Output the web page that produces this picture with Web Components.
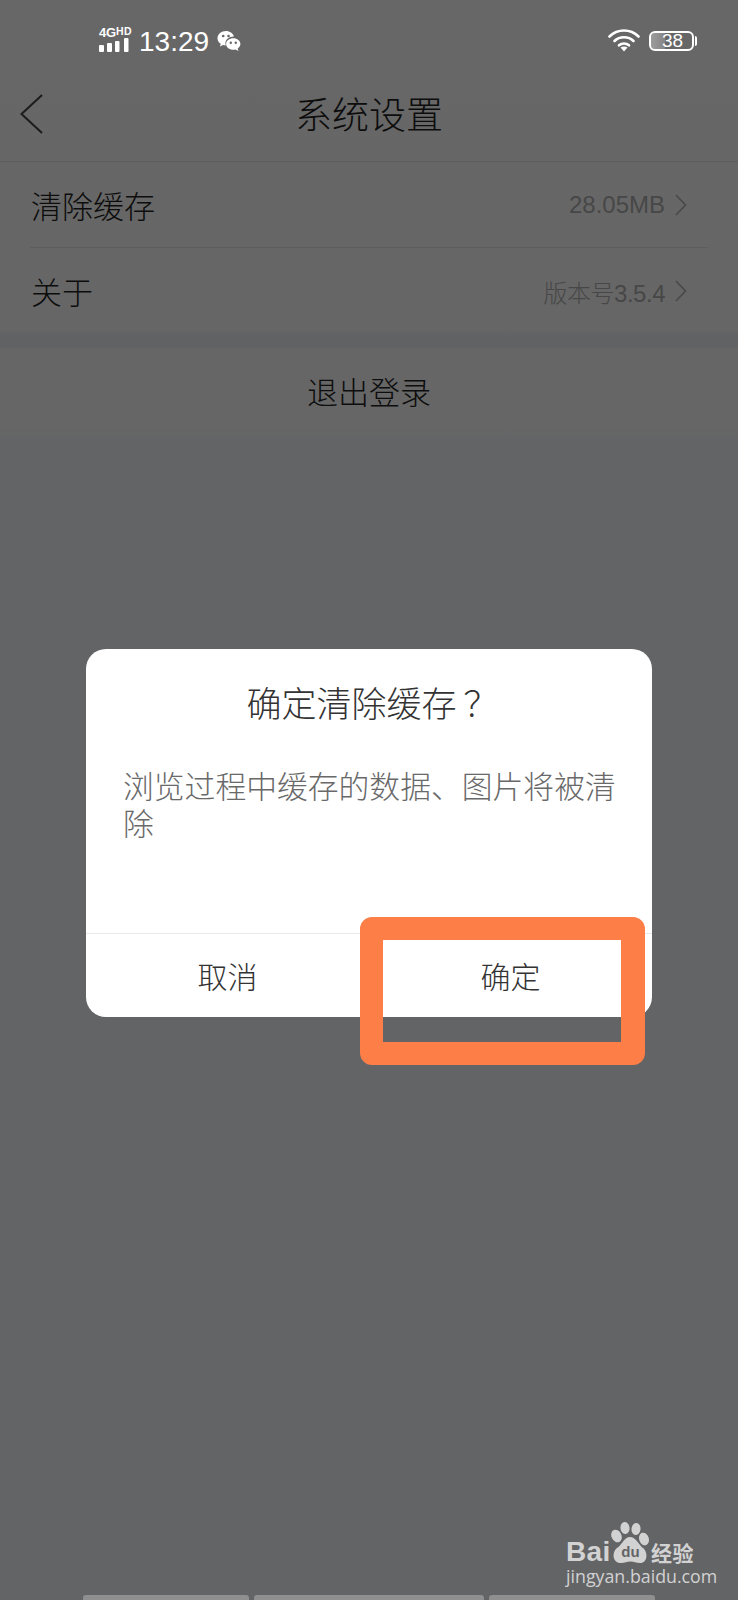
<!DOCTYPE html>
<html lang="zh">
<head>
<meta charset="utf-8">
<title>系统设置</title>
<style>
  html, body { margin: 0; padding: 0; background: #636466; }
  body { font-family: "Noto Sans CJK SC", "Liberation Sans", sans-serif; font-weight: 300; }
</style>
</head>
<body>
<settings-page>
  <status-bar slot="status"></status-bar>
  <nav-bar slot="nav">系统设置</nav-bar>
  <setting-row slot="rows" label="清除缓存" value="28.05MB" divider></setting-row>
  <setting-row slot="rows" label="关于" value="版本号3.5.4" narrow></setting-row>
  <logout-row slot="logout">退出登录</logout-row>
  <confirm-dialog slot="overlay" heading="确定清除缓存" cancel="取消" ok="确定">浏览过程中缓存的数据、图片将被清除</confirm-dialog>
  <baidu-mark slot="overlay"></baidu-mark>
  <bottom-tabs slot="bottom"></bottom-tabs>
</settings-page>

<script>
class SettingsPage extends HTMLElement {
  constructor() {
    super();
    this.attachShadow({ mode: "open" });
    this.shadowRoot.innerHTML = `
      <style>
        :host {
          display: flex;
          flex-direction: column;
          position: relative;
          width: 738px;
          height: 1600px;
          overflow: hidden;
          background: linear-gradient(#676767 0, #666666 330px, #616264 336px, #616264 347px, #666666 349px, #666666 425px, #636466 445px);
        }
        .spacer { flex: 1; }
      </style>
      <slot name="status"></slot>
      <slot name="nav"></slot>
      <slot name="rows"></slot>
      <slot name="logout"></slot>
      <div class="spacer"></div>
      <slot name="bottom"></slot>
      <slot name="overlay"></slot>
    `;
  }
}

class StatusBar extends HTMLElement {
  constructor() {
    super();
    this.attachShadow({ mode: "open" });
    this.shadowRoot.innerHTML = `
      <style>
        :host {
          display: flex;
          align-items: center;
          box-sizing: border-box;
          height: 84px;
          padding: 0 42px 0 99px;
          color: #fff;
          font-family: "Liberation Sans", sans-serif;
          font-weight: 400;
        }
        .net { display: flex; flex-direction: column; width: 32px; margin-top: -6px; }
        .net-text { font-size: 13px; font-weight: 700; line-height: 11px; height: 11px; white-space: nowrap; letter-spacing: -.2px; }
        .net-text small { font-size: 10.500px; vertical-align: 2px; letter-spacing: .4px; }
        .time { font-size: 28px; line-height: 34px; margin-left: 8px; }
        .wechat { margin-left: 8px; margin-top: -1px; }
        .spacer { flex: 1; }
        .wifi { margin-top: -4px; }
        .battery {
          position: relative;
          display: flex;
          align-items: center;
          justify-content: center;
          box-sizing: border-box;
          width: 45px;
          height: 20px;
          margin: -3px 2px 0 9px;
          padding-left: 2px;
          border: 2px solid #fff;
          border-radius: 6px;
          background: linear-gradient(90deg, #9c9c9c 0, #858585 35%, transparent 35%);
          background-clip: padding-box;
          font-size: 19px;
          line-height: 16px;
        }
        .battery::after {
          content: "";
          position: absolute;
          right: -5px;
          top: 3px;
          width: 2px;
          height: 10px;
          background: #fff;
          border-radius: 0 2px 2px 0;
        }
      </style>
      <div class="net">
        <div class="net-text">4G<small>HD</small></div>
        <svg width="30" height="14" viewBox="0 0 30 14" style="margin-top:1px">
          <rect x="0" y="7" width="5" height="7" rx="1" fill="#fff"/>
          <rect x="8" y="5" width="5" height="9" rx="1" fill="#fff"/>
          <rect x="16" y="3" width="4.500" height="11" rx="1" fill="#fff"/>
          <rect x="25" y="0" width="4.500" height="14" rx="1" fill="#fff"/>
        </svg>
      </div>
      <span class="time">13:29</span>
      <svg class="wechat" width="24" height="24" viewBox="0 0 24 24">
        <path d="M9 1C4.300 1 .5 4.200 .5 8.200c0 2.300 1.300 4.300 3.200 5.600L3 16.500l3-1.500c.9.300 1.800.4 2.800.4-.3-.8-.4-1.500-.4-2.200 0-3.800 3.600-6.800 8-6.800h.6C15.900 3.400 12.700 1 9 1z" fill="#fff"/>
        <path d="M16.300 8.200c-4 0-7.200 2.500-7.200 5.800s3.200 5.800 7.200 5.800c.9 0 1.700-.1 2.400-.4l2.700 1.500-.7-2.400c1.600-1.100 2.700-2.700 2.700-4.500 0-3.300-3.200-5.800-7.100-5.800z" fill="#fff"/>
        <circle cx="6.200" cy="6" r="1.300" fill="#666"/>
        <circle cx="11.500" cy="6" r="1.300" fill="#666"/>
        <circle cx="13.800" cy="12.800" r="1.200" fill="#666"/>
        <circle cx="18.800" cy="12.800" r="1.200" fill="#666"/>
      </svg>
      <div class="spacer"></div>
      <svg class="wifi" width="32" height="24" viewBox="0 0 32 24" fill="none" stroke="#fff" stroke-width="2.600" stroke-linecap="round">
        <path d="M1.500 8.500C9.500 .5 22.500 .5 30.500 8.500"/>
        <path d="M6.500 13C11.500 8 20.500 8 25.500 13"/>
        <path d="M11 17.300C13.800 14.800 18.200 14.800 21 17.300"/>
        <path d="M12.500 19.500L16 23.500L19.500 19.500C17.500 18 14.500 18 12.500 19.500Z" fill="#fff" stroke="none"/>
      </svg>
      <div class="battery">38</div>
    `;
  }
}

class NavBar extends HTMLElement {
  constructor() {
    super();
    this.attachShadow({ mode: "open" });
    this.shadowRoot.innerHTML = `
      <style>
        :host {
          display: flex;
          align-items: center;
          justify-content: center;
          position: relative;
          box-sizing: border-box;
          height: 78px;
          padding-bottom: 20px;
          border-bottom: 1px solid #5d5d5d;
          color: #0d0d0d;
          font-size: 37px;
          line-height: 50px;
        }
        svg { position: absolute; left: 19px; top: 9px; }
      </style>
      <svg width="26" height="42" viewBox="0 0 26 42" fill="none" stroke="#1c1c1c" stroke-width="2">
        <path d="M23 2L2.500 21L23 40"/>
      </svg>
      <slot></slot>
    `;
  }
}

class SettingRow extends HTMLElement {
  constructor() {
    super();
    this.attachShadow({ mode: "open" });
    this.shadowRoot.innerHTML = `
      <style>
        :host { display: block; }
        .row {
          display: flex;
          align-items: center;
          justify-content: space-between;
          box-sizing: border-box;
          height: 86px;
          margin: 0 30px;
          padding-right: 21px;
          color: #0d0d0d;
          font-size: 31px;
        }
        :host([divider]) .row { border-bottom: 1px solid #5d5d5d; }
        .label { margin: -1px 0 0 1px; }
        .value {
          display: flex;
          align-items: center;
          gap: 10px;
          color: #474747;
          font-family: "Liberation Sans", "Noto Sans CJK SC", sans-serif;
          font-size: 24px;
        }
        :host([narrow]) .val { letter-spacing: -.5px; }
      </style>
      <div class="row">
        <span class="label"></span>
        <div class="value">
          <span class="val"></span>
          <svg width="12" height="22" viewBox="0 0 12 22" fill="none" stroke="#4a4a4a" stroke-width="1.800"><path d="M1 1L10.500 11L1 21"/></svg>
        </div>
      </div>
    `;
  }

  connectedCallback() {
    this.shadowRoot.querySelector(".label").textContent = this.getAttribute("label");
    this.shadowRoot.querySelector(".val").textContent = this.getAttribute("value");
  }
}

class LogoutRow extends HTMLElement {
  constructor() {
    super();
    this.attachShadow({ mode: "open" });
    this.shadowRoot.innerHTML = `
      <style>
        :host {
          display: flex;
          align-items: center;
          justify-content: center;
          height: 86px;
          margin-top: 13px;
          color: #0d0d0d;
          font-size: 31px;
        }
      </style>
      <slot></slot>
    `;
  }
}

class ConfirmDialog extends HTMLElement {
  constructor() {
    super();
    this.attachShadow({ mode: "open" });
    this.shadowRoot.innerHTML = `
      <style>
        :host {
          display: flex;
          flex-direction: column;
          position: absolute;
          left: 86px;
          top: 649px;
          width: 566px;
          height: 368px;
          box-sizing: border-box;
          background: #fff;
          border-radius: 20px;
        }
        h2 {
          margin: 0;
          padding-top: 28px;
          text-align: center;
          color: #333;
          font-size: 35px;
          font-weight: 300;
          line-height: 50px;
        }
        /* the full-width mark sits left in its cell in this font, nudge it over */
        h2 span { margin: 0 -7px 0 7px; }
        .body {
          flex: 1;
          padding: 40px 32px 0 37px;
          color: #696969;
          font-size: 30.800px;
          line-height: 36.500px;
          word-break: break-all;
        }
        .buttons {
          display: flex;
          height: 83px;
          border-top: 1px solid #e9e9e9;
          color: #333;
          font-size: 30px;
        }
        .buttons div { flex: 1; display: flex; align-items: center; justify-content: center; padding-bottom: 2px; }
      </style>
      <h2><slot-text></slot-text><span>？</span></h2>
      <div class="body"><slot></slot></div>
      <div class="buttons">
        <div class="cancel"></div>
        <div class="ok"></div>
      </div>
      <annotation-box></annotation-box>
    `;
  }

  connectedCallback() {
    this.shadowRoot.querySelector("slot-text").textContent = this.getAttribute("heading");
    this.shadowRoot.querySelector(".cancel").textContent = this.getAttribute("cancel");
    this.shadowRoot.querySelector(".ok").textContent = this.getAttribute("ok");
  }
}

class AnnotationBox extends HTMLElement {
  constructor() {
    super();
    this.attachShadow({ mode: "open" });
    this.shadowRoot.innerHTML = `
      <style>
        :host {
          position: absolute;
          left: 274px;
          top: 268px;
          width: 285px;
          height: 148px;
          box-sizing: border-box;
          border-style: solid;
          border-color: #fd7e47;
          border-width: 23px 24px 23px 23px;
          border-radius: 12px;
        }
      </style>
    `;
  }
}

class BaiduMark extends HTMLElement {
  constructor() {
    super();
    this.attachShadow({ mode: "open" });
    this.shadowRoot.innerHTML = `
      <style>
        :host {
          position: absolute;
          left: 566px;
          top: 1522px;
          width: 134px;
          height: 62px;
          display: flex;
          flex-direction: column;
          color: #d2d2d2;
        }
        .top { display: flex; align-items: flex-end; height: 41px; }
        .bai { font: 700 28px/26px "Liberation Sans", sans-serif; letter-spacing: .3px; width: 44px; margin-bottom: -2px; }
        .jy { font-size: 21px; line-height: 24px; font-weight: 700; white-space: nowrap; margin-left: 1px; letter-spacing: .5px; margin-bottom: -1px; }
        .url { font: 17.800px/20px "Open Sans", sans-serif; white-space: nowrap; margin-top: 3px; }
        svg text { font: 700 15px "Liberation Sans", sans-serif; fill: #636466; }
      </style>
      <div class="top">
        <span class="bai">Bai</span>
        <svg width="40" height="41" viewBox="0 0 40 41" style="flex:none">
          <ellipse cx="6.500" cy="14" rx="5" ry="6.500" transform="rotate(-25 6.500 14)" fill="#d2d2d2"/>
          <ellipse cx="15" cy="6" rx="4.500" ry="6" transform="rotate(-8 15 6)" fill="#d2d2d2"/>
          <ellipse cx="26" cy="7" rx="4.500" ry="6" transform="rotate(8 26 7)" fill="#d2d2d2"/>
          <ellipse cx="34" cy="17" rx="4.800" ry="6.500" transform="rotate(-18 34 17)" fill="#d2d2d2"/>
          <path d="M20 15C14 15 13 22 7 26C2 30 2 41 11 41C15 41 17 39.500 20.500 39.500C24 39.500 26 41 30 41C38 41 38 30 33 26C28 22 26 15 20 15Z" fill="#d2d2d2"/>
          <text x="20.500" y="35" text-anchor="middle">du</text>
        </svg>
        <span class="jy">经验</span>
      </div>
      <div class="url">jingyan.baidu.com</div>
    `;
  }
}

class BottomTabs extends HTMLElement {
  constructor() {
    super();
    this.attachShadow({ mode: "open" });
    this.shadowRoot.innerHTML = `
      <style>
        :host {
          display: flex;
          gap: 5px;
          height: 5px;
          padding: 0 83px;
        }
        div { background: #8f8f8f; border-radius: 3px 3px 0 0; }
        .side { width: 166px; }
        .mid { width: 230px; }
      </style>
      <div class="side"></div><div class="mid"></div><div class="side"></div>
    `;
  }
}

customElements.define("settings-page", SettingsPage);
customElements.define("status-bar", StatusBar);
customElements.define("nav-bar", NavBar);
customElements.define("setting-row", SettingRow);
customElements.define("logout-row", LogoutRow);
customElements.define("confirm-dialog", ConfirmDialog);
customElements.define("annotation-box", AnnotationBox);
customElements.define("baidu-mark", BaiduMark);
customElements.define("bottom-tabs", BottomTabs);
</script>
</body>
</html>
